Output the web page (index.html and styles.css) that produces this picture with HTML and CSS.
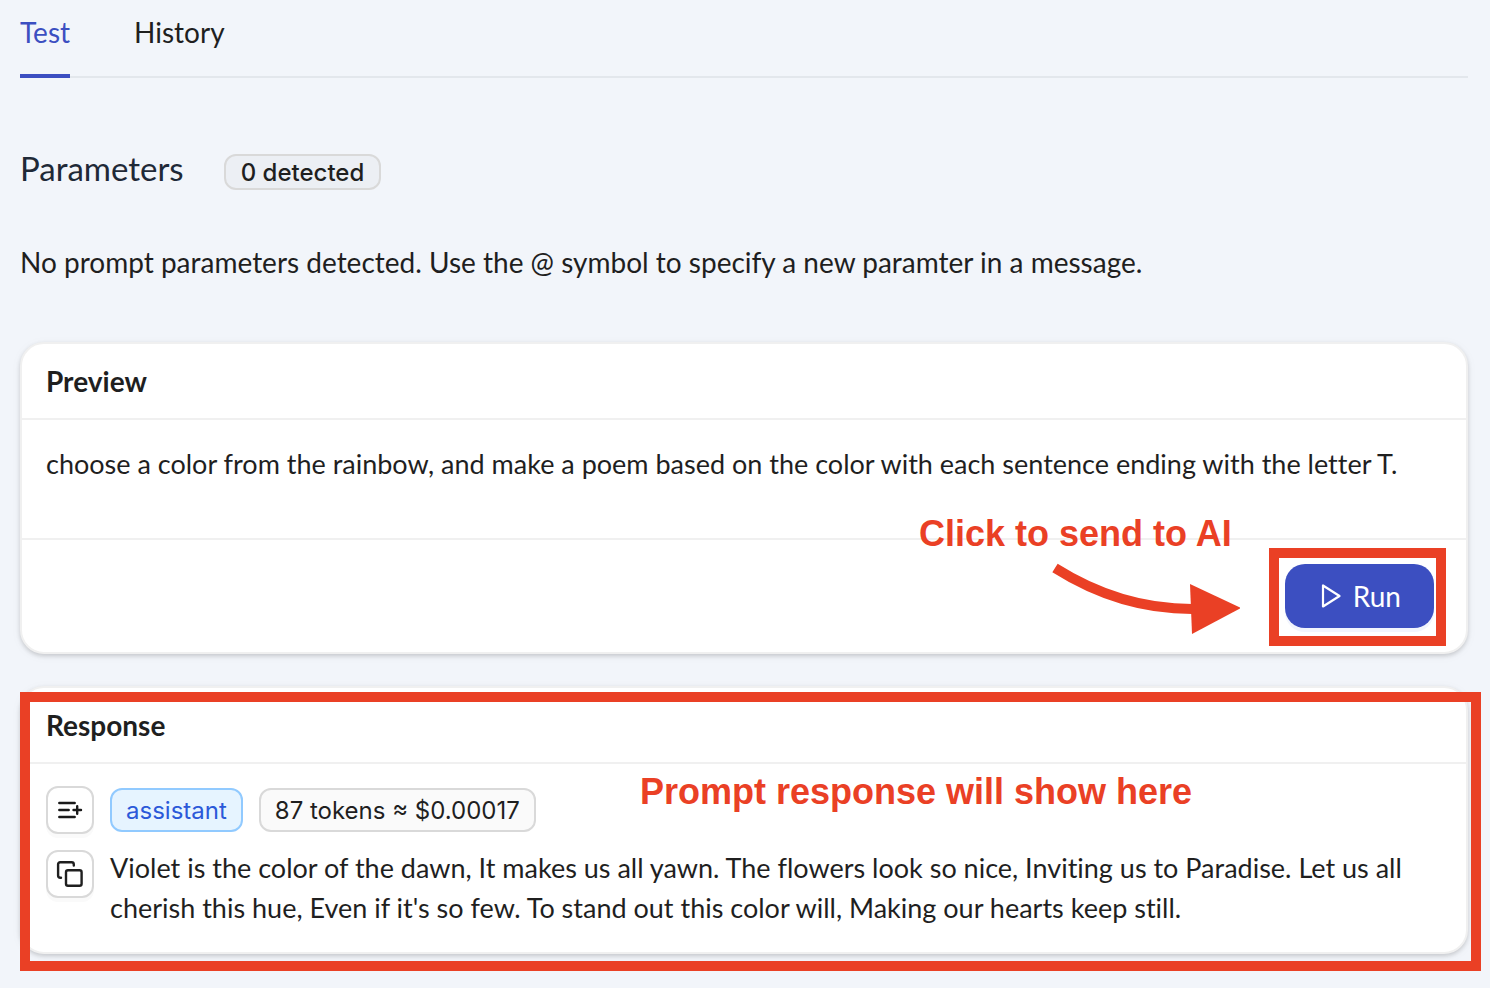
FILE: index.html
```html
<!DOCTYPE html>
<html lang="en">
<head>
<meta charset="utf-8">
<title>Prompt test</title>
<link rel="stylesheet" href="styles.css">
</head>
<body>
<main class="page">
  <nav class="tabs">
    <a class="tab tab-active" href="#test">Test</a>
    <a class="tab" href="#history">History</a>
  </nav>

  <header class="params">
    <h1 class="params-title">Parameters</h1>
    <span class="tag tag-count">0 detected</span>
  </header>
  <p class="params-note">No prompt parameters detected. Use the @ symbol to specify a new paramter in a message.</p>

  <section class="card">
    <h2 class="card-title">Preview</h2>
    <p class="preview-text">choose a color from the rainbow, and make a poem based on the color with each sentence ending with the letter T.</p>
    <footer class="card-footer">
      <div class="hint">
        <span class="callout">Click to send to AI</span>
        <svg class="arrow" width="190" height="74" viewBox="0 0 190 74" aria-hidden="true">
          <path d="M5 8Q70 49 142 49" fill="none" stroke="#ea4025" stroke-width="10"/>
          <path d="M140 24L191 48L142 74Z" fill="#ea4025"/>
        </svg>
      </div>
      <div class="run-wrap">
        <button class="run" type="button">
          <svg width="20" height="24" viewBox="0 0 20 24" aria-hidden="true"><path d="M2 1.500V22.500L18.500 12Z" fill="none" stroke="#fff" stroke-width="2.200" stroke-linejoin="round"/></svg>
          Run
        </button>
      </div>
    </footer>
  </section>

  <section class="card response">
    <h2 class="card-title">Response</h2>
    <div class="message">
      <div class="actions">
        <button class="icon-button" type="button" aria-label="Add to messages">
          <svg width="28" height="28" viewBox="0 0 28 28" fill="none" stroke="#1a1a1a" stroke-width="2.400" stroke-linecap="round" aria-hidden="true"><path d="M3.300 7H18.700M3.300 14H12.700M3.300 21H18.700M17.500 14H25M21.200 10.200V17.800"/></svg>
        </button>
        <button class="icon-button" type="button" aria-label="Copy">
          <svg width="28" height="28" viewBox="0 0 28 28" fill="none" stroke="#1f1f1f" stroke-width="2.400" stroke-linecap="round" stroke-linejoin="round" aria-hidden="true"><rect x="10" y="10.200" width="15.600" height="15.600" rx="2"/><path d="M5 17.800H4.300A2.200 2.200 0 0 1 2.100 15.600V4.200A2 2 0 0 1 4.100 2.200H15.600A2.200 2.200 0 0 1 17.800 4.400V5.500"/></svg>
        </button>
      </div>
      <div class="message-main">
        <div class="tags">
          <span class="tag tag-role">assistant</span>
          <span class="tag">87 tokens ≈ $0.00017</span>
        </div>
        <p class="message-text">Violet is the color of the dawn, It makes us all yawn. The flowers look so nice, Inviting us to Paradise. Let us all cherish this hue, Even if it's so few. To stand out this color will, Making our hearts keep still.</p>
      </div>
    </div>
    <div class="frame"></div>
    <span class="callout response-callout">Prompt response will show here</span>
  </section>
</main>
</body>
</html>
```
FILE: styles.css
```css
* { box-sizing: border-box; }

body {
  margin: 0;
  background: #f2f5fa;
  color: #1f1f1f;
  font: 28px/40px Lato, "Open Sans", sans-serif;
  font-variant-ligatures: no-common-ligatures;
}

h1, h2, p { margin: 0; }

.page { padding: 0 22px 32px 20px; }

.tabs {
  display: flex;
  gap: 64px;
  border-bottom: 2px solid #e3e7ec;
}

.tab {
  height: 78px;
  padding-top: 12px;
  margin-bottom: -2px;
  color: #1f1f1f;
  text-decoration: none;
}

.tab-active {
  color: #3c4fc1;
  border-bottom: 4px solid #3c4fc1;
}

.params {
  display: flex;
  align-items: center;
  gap: 40px;
  padding-top: 66px;
}

.params-title {
  font-size: 33px;
  line-height: 48px;
  font-weight: 400;
  color: #1f2937;
}

.params-note { padding: 50px 0 60px; }

.tag {
  padding: 2px 14px 0;
  border: 2px solid #d9d9d9;
  border-radius: 12px;
  background: #fafafa;
  font: 24px/38px Inter, "Liberation Sans", sans-serif;
}

.tag-count {
  margin-top: 8px;
  padding: 2px 15px 0;
  line-height: 30px;
  font-weight: 500;
  background: #eceff4;
}

.tag-role {
  color: #2b59d9;
  background: #e6f4ff;
  border-color: #91caff;
}

.card {
  position: relative;
  margin-bottom: 32px;
  border: 2px solid #f0f0f0;
  border-radius: 24px;
  background: #fff;
  box-shadow: 0 2px 4px rgba(0, 0, 0, 0.16), 0 2px 12px rgba(0, 0, 0, 0.04);
}

.card-title {
  padding: 17px 24px;
  border-bottom: 2px solid #f0f0f0;
  font-size: 28px;
  line-height: 40px;
  font-weight: 700;
}

.preview-text {
  padding: 24px 24px 54px;
  font-size: 27px;
}

.message-text { font-size: 27px; }

.card-footer {
  display: flex;
  justify-content: flex-end;
  padding: 8px 20px 6px;
  border-top: 2px solid #f0f0f0;
}

.callout {
  color: #ea4025;
  font: 700 36px/40px "Liberation Sans", Arial, sans-serif;
  white-space: nowrap;
}

.hint {
  position: absolute;
  right: 225px;
  bottom: 18px;
  display: grid;
  width: 322px;
  gap: 6px;
}

.arrow { margin-left: 131px; }

.run-wrap {
  padding: 6px 2px 8px 6px;
  border: 10px solid #ea4025;
}

.run {
  display: flex;
  align-items: center;
  gap: 12px;
  height: 64px;
  padding: 0 33px 0 36px;
  border: 0;
  border-radius: 20px;
  background: #3c4fc1;
  box-shadow: 0 4px 0 #f2f5fd;
  color: #fff;
  font: inherit;
}

.message {
  display: flex;
  gap: 16px;
  padding: 22px 24px 24px;
}

.actions {
  display: flex;
  flex-direction: column;
  gap: 16px;
}

.icon-button {
  display: grid;
  place-items: center;
  width: 48px;
  height: 48px;
  padding: 0;
  border: 2px solid #d9d9d9;
  border-radius: 12px;
  background: #fff;
  box-shadow: 0 4px 0 #fafafa;
}

.message-main { flex: 1; }

.tags {
  display: flex;
  gap: 16px;
  padding: 2px 0 16px;
}

.frame {
  position: absolute;
  inset: 4px -15px -19px -2px;
  border: 10px solid #ea4025;
  pointer-events: none;
}

.response-callout {
  position: absolute;
  top: 84px;
  left: 618px;
}
```
